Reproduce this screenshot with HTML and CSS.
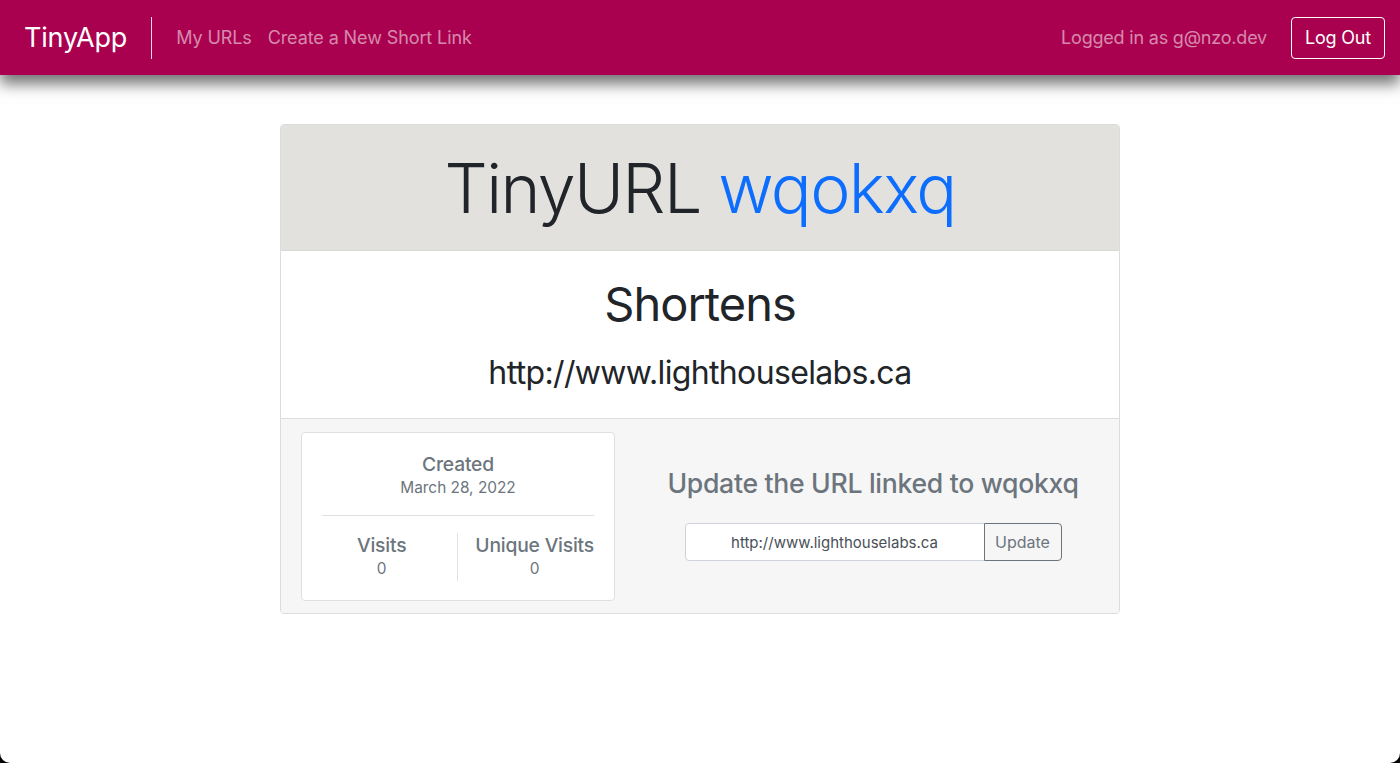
FILE: index.html
```html
<!DOCTYPE html>
<html lang="en">
<head>
<meta charset="utf-8">
<title>TinyApp</title>
<link rel="stylesheet" href="styles.css">
</head>
<body>
<div class="page">
  <nav class="navbar">
    <a class="brand" href="#">TinyApp</a>
    <div class="nav-links">
      <a class="nav-link" href="#">My URLs</a>
      <a class="nav-link" href="#">Create a New Short Link</a>
    </div>
    <div class="nav-right">
      <span class="nav-user">Logged in as g@nzo.dev</span>
      <button class="btn-logout">Log Out</button>
    </div>
  </nav>

  <main class="container">
    <div class="card">
      <div class="card-header">
        <h1 class="title">TinyURL <span class="short">wqokxq</span></h1>
      </div>
      <div class="card-body">
        <h2 class="shortens">Shortens</h2>
        <p class="long-url">http://www.lighthouselabs.ca</p>
      </div>
      <div class="card-footer">
        <div class="stats">
          <div class="stat-created">
            <div class="stat-label">Created</div>
            <div class="stat-date">March 28, 2022</div>
          </div>
          <div class="stat-row">
            <div class="stat stat-visits">
              <div class="stat-label">Visits</div>
              <div class="stat-value">0</div>
            </div>
            <div class="stat stat-unique">
              <div class="stat-label">Unique Visits</div>
              <div class="stat-value">0</div>
            </div>
          </div>
        </div>
        <div class="update">
          <h3 class="update-title">Update the URL linked to wqokxq</h3>
          <form class="input-group">
            <input class="url-input" type="text" value="http://www.lighthouselabs.ca">
            <button class="btn-update" type="button">Update</button>
          </form>
        </div>
      </div>
    </div>
  </main>
</div>
</body>
</html>
```

FILE: styles.css
```css
* { box-sizing: border-box; }
html, body { margin: 0; padding: 0; height: 100%; }
body {
  background: #000;
  font-family: "Inter", "Open Sans", "Liberation Sans", sans-serif;
  color: #212529;
}
.page {
  background: #fff;
  min-height: 100vh;
  border-radius: 0 0 10px 10px;
  overflow: hidden;
}
.navbar {
  height: 75px;
  background: #a9014f;
  display: flex;
  align-items: center;
  padding: 0 15px 0 24px;
  box-shadow: 0 9px 14px rgba(0,0,0,0.55);
  position: relative;
  z-index: 1;
}
.brand {
  color: #fff;
  text-decoration: none;
  font-size: 27px;
  line-height: 42px;
  padding-right: 24px;
  border-right: 1px solid rgba(255,255,255,0.85);
  letter-spacing: -0.2px;
}
.nav-links {
  display: flex;
  gap: 16px;
  padding-left: 24px;
}
.nav-link {
  color: rgba(255,255,255,0.55);
  text-decoration: none;
  font-size: 18px;
  letter-spacing: -0.1px;
}
.nav-right {
  margin-left: auto;
  display: flex;
  align-items: center;
  gap: 24px;
}
.nav-user {
  color: rgba(255,255,255,0.55);
  font-size: 18px;
  letter-spacing: -0.2px;
}
.btn-logout {
  background: transparent;
  border: 1px solid #fff;
  border-radius: 4px;
  color: #fff;
  font-family: inherit;
  font-size: 18px;
  height: 42px;
  padding: 0 13px;
  letter-spacing: -0.2px;
}
.container {
  display: flex;
  justify-content: center;
  padding-top: 49px;
}
.card {
  width: 840px;
  border: 1px solid #dcdcdc;
  border-radius: 4px;
  overflow: hidden;
}
.card-header {
  background: #e2e1de;
  border-bottom: 1px solid #d6d6d6;
  padding: 20px 0 19px;
  text-align: center;
}
.title {
  margin: 0;
  font-size: 68px;
  font-weight: 300;
  line-height: 86px;
  letter-spacing: -1.6px;
}
.short { color: #0d6efd; }
.card-body {
  background: #fff;
  border-bottom: 1px solid #dcdcdc;
  text-align: center;
  padding: 23px 0 25px;
}
.shortens {
  margin: 0;
  font-size: 47px;
  font-weight: 400;
  line-height: 60px;
  letter-spacing: -1px;
}
.long-url {
  margin: 19px 0 0;
  font-size: 32px;
  line-height: 40px;
  letter-spacing: -0.65px;
}
.card-footer {
  background: #f6f6f6;
  display: flex;
  padding: 13px 0 12px 20px;
}
.stats {
  width: 314px;
  background: #fff;
  border: 1px solid #e0e0e0;
  border-radius: 4px;
  padding: 19px 20px 19px;
  color: #6c757d;
  text-align: center;
}
.stat-created {
  padding-bottom: 15px;
  border-bottom: 1px solid #dee2e6;
}
.stat-label {
  font-size: 19.3px;
  font-weight: 500;
  line-height: 24px;
  letter-spacing: -0.2px;
}
.stat-date, .stat-value {
  font-size: 15.4px;
  line-height: 24px;
}
.stat-row {
  display: grid;
  grid-template-columns: 1fr auto;
  margin-top: 17px;
}
.stat-visits { padding-right: 16px; }
.stat-unique {
  border-left: 1px solid #dee2e6;
  padding-left: 17px;
}
.update {
  flex: 1;
  padding-left: 12px;
  text-align: center;
  display: flex;
  flex-direction: column;
  align-items: center;
}
.update-title {
  margin: 36px 0 0;
  color: #6c757d;
  font-size: 26.6px;
  font-weight: 500;
  line-height: 30px;
  letter-spacing: -0.3px;
}
.input-group {
  display: flex;
  margin-top: 25px;
}
.url-input {
  width: 300px;
  height: 38px;
  border: 1px solid #ced4da;
  border-radius: 4px 0 0 4px;
  text-align: center;
  font-family: inherit;
  font-size: 15px;
  color: #495057;
  padding: 0 12px;
  outline: none;
}
.btn-update {
  width: 78px;
  height: 38px;
  border: 1px solid #6c757d;
  border-radius: 0 4px 4px 0;
  background: transparent;
  color: #6c757d;
  font-family: inherit;
  font-size: 16px;
  margin-left: -1px;
}
```
